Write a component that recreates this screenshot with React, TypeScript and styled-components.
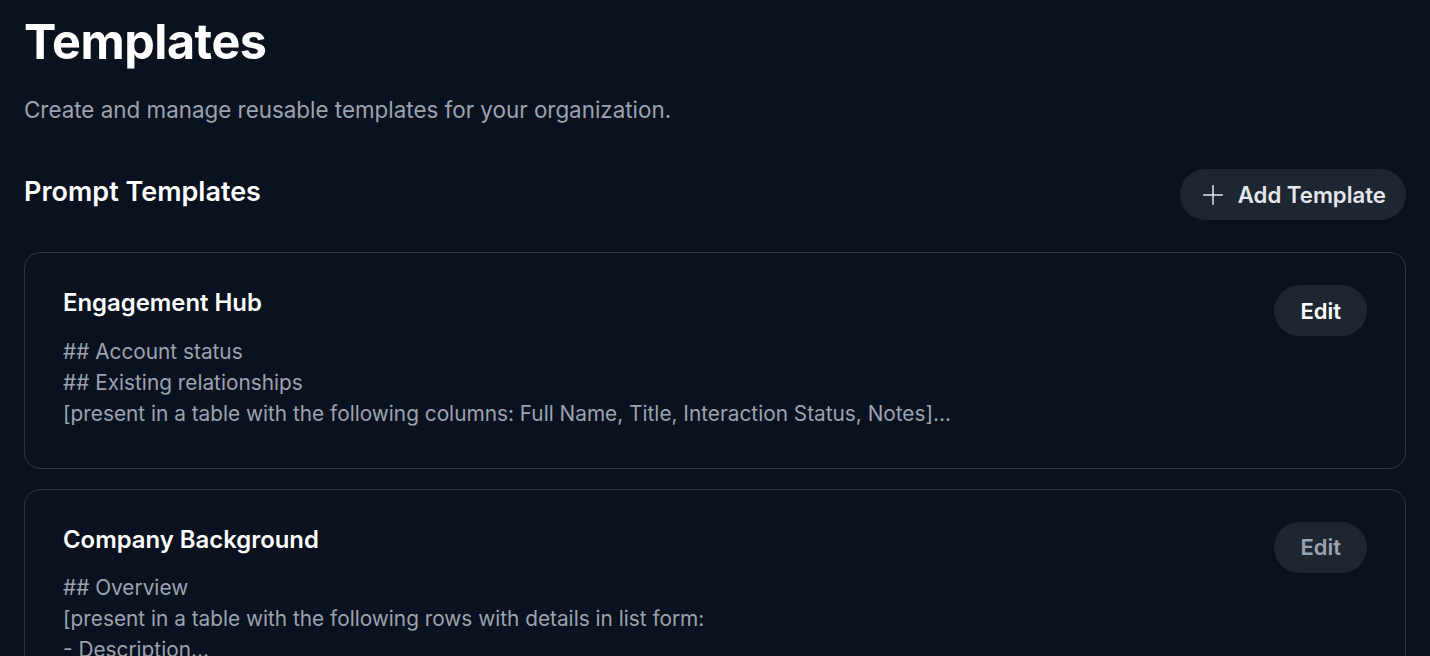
import { createGlobalStyle } from "styled-components";
import styled from "styled-components";
import { Plus } from "lucide-react";

const GlobalStyle = createGlobalStyle`
  html, body {
    margin: 0;
    padding: 0;
    background: #09121e;
  }
  body {
    font-family: Inter, "Noto Sans", sans-serif;
    color: #ffffff;
  }
`;

type Template = {
  name: string;
  lines: string[];
  muted?: boolean;
};

const templates: Template[] = [
  {
    name: "Engagement Hub",
    lines: [
      "## Account status",
      "## Existing relationships",
      "[present in a table with the following columns: Full Name, Title, Interaction Status, Notes]...",
    ],
  },
  {
    name: "Company Background",
    lines: [
      "## Overview",
      "[present in a table with the following rows with details in list form:",
      "- Description...",
    ],
    muted: true,
  },
];

function App() {
  return (
    <>
      <GlobalStyle />
      <Page>
        <Title>Templates</Title>
        <Subtitle>Create and manage reusable templates for your organization.</Subtitle>
        <SectionHeader>
          <SectionTitle>Prompt Templates</SectionTitle>
          <PillButton>
            <Plus size={32} strokeWidth={1.5} absoluteStrokeWidth />
            Add Template
          </PillButton>
        </SectionHeader>
        <CardList>
          {templates.map((t) => (
            <Card key={t.name}>
              <CardBody>
                <CardTitle>{t.name}</CardTitle>
                <Preview>
                  {t.lines.map((l) => (
                    <div key={l}>{l}</div>
                  ))}
                </Preview>
              </CardBody>
              <EditButton $muted={t.muted}>Edit</EditButton>
            </Card>
          ))}
        </CardList>
      </Page>
    </>
  );
}

export default App;

const Page = styled.div`
  padding: 12px 24px 24px;
  display: flex;
  flex-direction: column;
`;

const Title = styled.h1`
  margin: 0;
  font-size: 48.5px;
  line-height: 60px;
  font-weight: 700;
  letter-spacing: -0.5px;
  color: #ffffff;
`;

const Subtitle = styled.p`
  margin: 23px 0 0;
  font-size: 22.4px;
  line-height: 30px;
  color: #9ca3af;
`;

const SectionHeader = styled.div`
  display: flex;
  align-items: center;
  justify-content: space-between;
  margin-top: 44px;
`;

const SectionTitle = styled.h2`
  margin: 0 0 5px;
  font-size: 27px;
  line-height: 34px;
  font-weight: 600;
  color: #ffffff;
`;

const PillButton = styled.button`
  display: flex;
  align-items: center;
  gap: 9px;
  height: 51px;
  padding: 0 20px 0 17px;
  border: none;
  border-radius: 999px;
  background: #1e2731;
  color: #e5e7eb;
  font-family: inherit;
  font-size: 22.2px;
  font-weight: 600;
  cursor: pointer;
`;

const CardList = styled.div`
  display: flex;
  flex-direction: column;
  gap: 20px;
  margin-top: 32px;
`;

const Card = styled.div`
  display: flex;
  justify-content: space-between;
  align-items: flex-start;
  border: 1px solid #2e3744;
  border-radius: 16px;
  padding: 32px 38px 39px;
`;

const CardBody = styled.div`
  display: flex;
  flex-direction: column;
`;

const CardTitle = styled.h3`
  margin: 0;
  font-size: 23.9px;
  line-height: 36px;
  font-weight: 600;
  color: #ffffff;
`;

const Preview = styled.div`
  margin-top: 14.5px;
  font-size: 20.8px;
  line-height: 31px;
  color: #9ca3af;
`;

const EditButton = styled.button<{ $muted?: boolean }>`
  height: 51px;
  padding: 0 26px;
  border: none;
  border-radius: 999px;
  background: #1e2731;
  color: ${(p) => (p.$muted ? "#9ca3af" : "#ffffff")};
  font-family: inherit;
  font-size: 22px;
  font-weight: 600;
  cursor: pointer;
  flex-shrink: 0;
`;
